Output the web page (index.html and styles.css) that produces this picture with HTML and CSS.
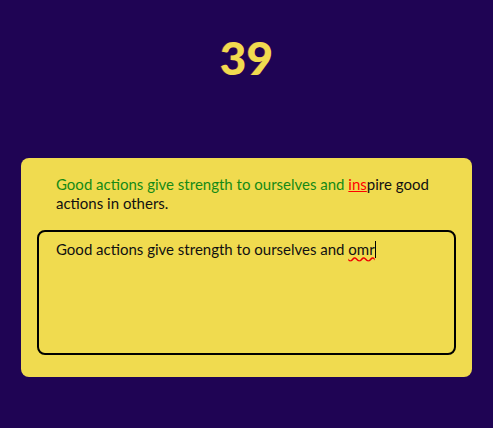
FILE: index.html
```html
<!DOCTYPE html>
<html>
<head>
<meta charset="utf-8">
<link rel="stylesheet" href="styles.css">
</head>
<body>
<div class="page">
  <h1 class="timer">39</h1>
  <div class="card">
    <p class="quote"><span class="done">Good actions give strength to ourselves and </span><span class="wrong">ins</span>pire good actions in others.</p>
    <div class="input">Good actions give strength to ourselves and <span class="typo">omr</span><span class="caret"></span></div>
  </div>
</div>
</body>
</html>
```
FILE: styles.css
```css
html, body {
  margin: 0;
  padding: 0;
  background: #1f0454;
  height: 100%;
}
.page {
  font-family: Lato, "Noto Sans", sans-serif;
  padding: 30px 21px 0;
}
.timer {
  margin: 0;
  text-align: center;
  color: #f0db4f;
  font-size: 46px;
  font-weight: 900;
  line-height: 56px;
  text-shadow: -1px 0 0 rgba(220, 40, 90, 0.5);
}
.card {
  margin-top: 72px;
  background: #f0db4f;
  border-radius: 8px;
  padding: 17px 16px 22px;
}
.quote {
  margin: 0 0 17px;
  padding: 0 19px;
  font-size: 15px;
  line-height: 19px;
  color: #111;
}
.done { color: #158a15; }
.wrong { color: #f00; text-decoration: underline; }
.input {
  box-sizing: border-box;
  height: 125px;
  border: 2px solid #000;
  border-radius: 8px;
  padding: 8px 17px;
  font-size: 15px;
  line-height: 19px;
  color: #111;
}
.typo {
  text-decoration: underline wavy #e00;
  text-decoration-skip-ink: none;
}
.caret {
  display: inline-block;
  width: 1px;
  height: 17px;
  background: #000;
  vertical-align: -3px;
}
```
